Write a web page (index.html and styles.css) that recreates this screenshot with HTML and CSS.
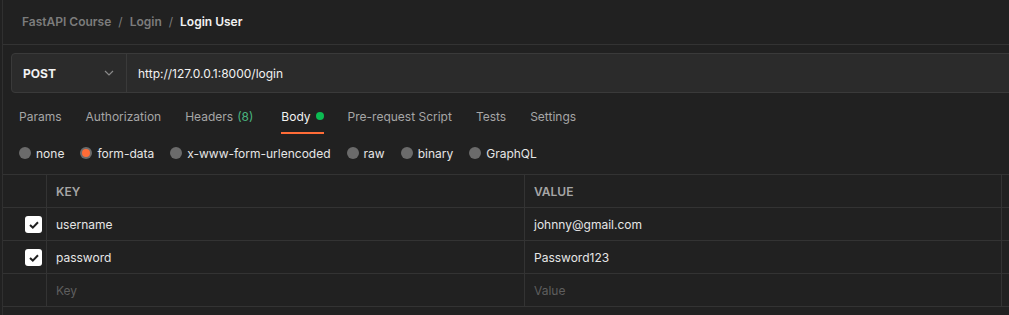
FILE: index.html
```html
<!DOCTYPE html>
<html lang="en">
<head>
  <meta charset="UTF-8" />
  <meta name="viewport" content="width=device-width, initial-scale=1.0" />
  <title>Login User</title>
  <link rel="stylesheet" href="styles.css">
</head>
<body>
  <div class="workspace">
    <!-- breadcrumb -->
    <header class="crumbs">
      <span class="crumb">FastAPI Course</span>
      <span class="sep">/</span>
      <span class="crumb">Login</span>
      <span class="sep">/</span>
      <span class="crumb current">Login User</span>
    </header>

    <!-- method + url -->
    <div class="request-bar">
      <div class="method">
        <span>POST</span>
        <svg class="chevron" width="10" height="6" viewBox="0 0 10 6">
          <path d="M1 1l4 4 4-4" fill="none" stroke="#8a8a8a" stroke-width="1.2" />
        </svg>
      </div>
      <div class="url">http://127.0.0.1:8000/login</div>
    </div>

    <nav class="tabs">
      <a class="tab">Params</a>
      <a class="tab">Authorization</a>
      <a class="tab">Headers <span class="count">(8)</span></a>
      <a class="tab active">Body <span class="dot"></span></a>
      <a class="tab">Pre-request Script</a>
      <a class="tab">Tests</a>
      <a class="tab">Settings</a>
    </nav>

    <div class="body-types">
      <label class="radio"><span class="circle"></span>none</label>
      <label class="radio checked"><span class="circle"></span>form-data</label>
      <label class="radio"><span class="circle"></span>x-www-form-urlencoded</label>
      <label class="radio"><span class="circle"></span>raw</label>
      <label class="radio"><span class="circle"></span>binary</label>
      <label class="radio"><span class="circle"></span>GraphQL</label>
    </div>

    <div class="params">
      <div class="row head">
        <div class="cell check"></div>
        <div class="cell key">KEY</div>
        <div class="cell value">VALUE</div>
        <div class="cell extra"></div>
      </div>
      <div class="row">
        <div class="cell check"><span class="box"><svg width="10" height="8" viewBox="0 0 10 8"><path d="M1 4l2.8 2.6L9 1.2" fill="none" stroke="#1f1f1f" stroke-width="2" /></svg></span></div>
        <div class="cell key">username</div>
        <div class="cell value">johnny@gmail.com</div>
        <div class="cell extra"></div>
      </div>
      <div class="row">
        <div class="cell check"><span class="box"><svg width="10" height="8" viewBox="0 0 10 8"><path d="M1 4l2.8 2.6L9 1.2" fill="none" stroke="#1f1f1f" stroke-width="2" /></svg></span></div>
        <div class="cell key">password</div>
        <div class="cell value">Password123</div>
        <div class="cell extra"></div>
      </div>
      <div class="row">
        <div class="cell check"></div>
        <div class="cell key placeholder">Key</div>
        <div class="cell value placeholder">Value</div>
        <div class="cell extra"></div>
      </div>
    </div>
  </div>
</body>
</html>
```

FILE: styles.css
```css
* { box-sizing: border-box; }

body {
  margin: 0;
  background: #212121;
  color: #e6e6e6;
  font-family: Inter, "Noto Sans", sans-serif;
  font-size: 12px;
  overflow: hidden;
}

.workspace {
  margin-left: 2px;
  border-left: 1px solid #303030;
  height: 315px;
  width: 1200px;
}

.crumbs {
  height: 45px;
  border-bottom: 1px solid #333;
  display: flex;
  align-items: center;
  gap: 7px;
  padding-left: 19px;
  padding-bottom: 2px;
  font-weight: 600;
  color: #7c7c7c;
}

.crumbs .current { color: #f2f2f2; }
.crumbs .sep { color: #7c7c7c; font-weight: 400; }

.request-bar {
  display: flex;
  margin: 8px 0 0 8px;
  height: 40px;
  border: 1px solid #3a3a3a;
  border-radius: 4px;
  background: #2b2b2b;
}

.method {
  width: 115px;
  display: flex;
  align-items: center;
  justify-content: space-between;
  padding: 0 12px 0 11px;
  border-right: 1px solid #3a3a3a;
  font-weight: 700;
  color: #f2f2f2;
}

.url {
  display: flex;
  align-items: center;
  padding-left: 11px;
  color: #f2f2f2;
}

.tabs {
  display: flex;
  gap: 24px;
  padding-left: 16px;
  height: 41px;
  align-items: stretch;
}

.tab {
  display: flex;
  align-items: center;
  padding-top: 7px;
  color: #a6a6a6;
  border-bottom: 2px solid transparent;
  gap: 4px;
}

.tab .count { color: #49b47f; }

.tab.active {
  color: #f2f2f2;
  border-bottom-color: #ff6c37;
  margin-left: 4px;
  gap: 5px;
}

.dot {
  width: 8px;
  height: 8px;
  border-radius: 50%;
  background: #0cbb52;
}

.body-types {
  display: flex;
  align-items: center;
  gap: 16px;
  padding-left: 16px;
  padding-bottom: 2px;
  height: 40px;
  color: #e6e6e6;
}

.radio {
  display: flex;
  align-items: center;
  gap: 5px;
}

.circle {
  width: 12px;
  height: 12px;
  border-radius: 50%;
  background: #6b6b6b;
  display: flex;
  align-items: center;
  justify-content: center;
}

.radio.checked .circle::after {
  content: "";
  width: 8px;
  height: 8px;
  border-radius: 50%;
  background: #ff6c37;
}

.params {
  border-top: 1px solid #333;
}

.row {
  display: flex;
  height: 33px;
  border-bottom: 1px solid #333;
}

.cell {
  display: flex;
  align-items: center;
  padding-left: 9px;
  border-right: 1px solid #333;
}

.cell.check { width: 44px; justify-content: flex-end; padding: 1px 4px 0 0; }
.cell.key { width: 478px; }
.cell.value { width: 477px; }
.cell.extra { flex: 1; border-right: none; }

.head .cell {
  font-size: 12px;
  font-weight: 600;
  color: #a6a6a6;
}

.placeholder { color: #5e5e5e; }

.box {
  width: 17px;
  height: 17px;
  border-radius: 3px;
  background: #fff;
  display: flex;
  align-items: center;
  justify-content: center;
}
```
